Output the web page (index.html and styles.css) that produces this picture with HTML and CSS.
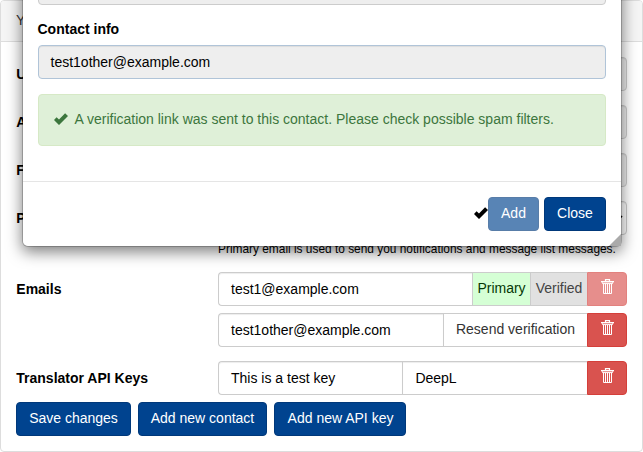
FILE: index.html
```html
<!DOCTYPE html>
<html lang="en">
<head>
<meta charset="utf-8">
<title>Your profile</title>
<link rel="stylesheet" href="styles.css">
</head>
<body>
<svg class="defs" width="0" height="0" aria-hidden="true">
  <symbol id="check" viewBox="0 0 14 12"><path d="M0 7.1 2.6 4.3 5 6.6 11.1 0.2 14 3.1 5 12z"/></symbol>
  <symbol id="trash" viewBox="0 0 13 16"><path d="M4.5 2.5V.6h4v1.9" fill="none" stroke="currentColor" stroke-width="1.2"/><path d="M0 2h13v1.4H0z" fill="currentColor"/><path d="M1.5 3.4v1.2h10V3.4M2.5 4.6v9.9h8V4.6M4.5 5v9M6.5 5v9M8.5 5v9" fill="none" stroke="currentColor"/></symbol>
</svg>
<main class="panel">
  <header class="panel-heading">Your profile</header>
  <form class="panel-body">
    <div class="row"><label>Username</label><div class="group"><span class="input disabled"></span></div></div>
    <div class="row"><label>Affiliation</label><div class="group"><span class="input disabled"></span></div></div>
    <div class="row"><label>Full name</label><div class="group"><span class="input disabled"></span></div></div>
    <div class="row help-row"><label>Primary email</label><div>
      <div class="group"><span class="input select"><svg width="9" height="6" viewBox="0 0 9 6"><path d="M1 1l3.5 3.5L8 1" fill="none" stroke="#000" stroke-width="1.7"/></svg></span></div>
      <p class="help">Primary email is used to send you notifications and message list messages.</p>
    </div></div>
    <div class="row emails"><label>Emails</label><div class="stack">
      <div class="group"><span class="input">test1@example.com</span><span class="addon primary">Primary</span><span class="addon verified">Verified</span><button type="button" class="delete faded"><svg><use href="#trash"/></svg></button></div>
      <div class="group"><span class="input">test1other@example.com</span><span class="addon resend">Resend verification</span><button type="button" class="delete"><svg><use href="#trash"/></svg></button></div>
    </div></div>
    <div class="row keys"><label>Translator API Keys</label>
      <div class="group"><span class="input">This is a test key</span><span class="input second">DeepL</span><button type="button" class="delete"><svg><use href="#trash"/></svg></button></div>
    </div>
    <div class="actions"><button type="button" class="btn save">Save changes</button><button type="button" class="btn contact">Add new contact</button><button type="button" class="btn api">Add new API key</button></div>
  </form>
</main>
<section class="modal">
  <div class="modal-body">
    <span class="input disabled"></span>
    <label class="info-label">Contact info</label>
    <span class="input disabled active">test1other@example.com</span>
    <div class="alert"><svg class="check"><use href="#check"/></svg><span>A verification link was sent to this contact. Please check possible spam filters.</span></div>
  </div>
  <footer class="modal-footer"><svg class="check"><use href="#check"/></svg><button type="button" class="btn add">Add</button><button type="button" class="btn close">Close</button></footer>
  <i class="grip"></i>
</section>
</body>
</html>
```

FILE: styles.css
```css
* { box-sizing: border-box; }
body { margin: 0; height: 452px; overflow: hidden; position: relative; background: #fff; color: #000; font: 14px/20px "Liberation Sans", Arial, sans-serif; }
button { font: inherit; margin: 0; padding: 0; }
.defs { position: absolute; }
.panel { height: 452px; border: 1px solid #ddd; border-radius: 4px; }
.panel-heading { height: 41px; padding: 9px 15px; color: #333; background: #f5f5f5; border-bottom: 1px solid #ddd; border-radius: 3px 3px 0 0; }
.panel-body { padding: 15px; }
.row { display: grid; grid-template-columns: 202px 1fr; margin-bottom: 14px; }
label { font-weight: bold; padding-top: 7px; }
.row > label { padding-left: .3px; }
.group { display: flex; height: 34px; min-width: 0; }
.input { display: block; flex: 1; height: 34px; padding: 6px 12px; border: 1px solid #ccc; border-radius: 4px; background: #fff; box-shadow: inset 0 1px 1px rgba(0,0,0,.075); white-space: nowrap; }
.disabled { background: #eee; }
.active { border-color: #b0c4d8; padding-left: 11.5px; }
.select { display: flex; align-items: center; justify-content: flex-end; padding-right: 3px; }
.help-row { margin-bottom: 0; }
.help { margin: 5px 0 0; height: 32px; font-size: 11.9px; line-height: 18px; white-space: nowrap; }
.stack { display: grid; gap: 7px; }
.group .input:not(:only-child) { border-radius: 4px 0 0 4px; border-right: 0; }
.group .input.second { border-radius: 0; padding-left: 12.4px; }
.keys .input:first-child { flex: 0 0 184px; }
.addon { border: 1px solid #ccc; border-right: 0; line-height: 30px; text-align: center; white-space: nowrap; }
.primary { width: 58px; color: #063806; background: #d5ffd5; }
.verified { width: 57px; color: #444; background: #e1e1e1; }
.resend { width: 144px; color: #333; }
.delete { width: 40px; height: 34px; display: flex; justify-content: center; padding-top: 6px; color: #fff; background: #d9534f; border: 1px solid #d43f3a; border-radius: 0 4px 4px 0; }
.delete svg { width: 13px; height: 16px; margin-left: 1px; }
.faded { opacity: .65; }
.keys { margin-bottom: 7px; }
.actions { display: flex; gap: 7px; }
.btn { height: 34px; color: #fff; background: #00438f; border: 1px solid #00387a; border-radius: 4px; line-height: 30px; padding-bottom: 2px; white-space: nowrap; }
.save { width: 115px; }
.contact { width: 129px; }
.api { width: 132px; padding-left: 1px; }
.modal { position: absolute; left: 22px; top: -30px; width: 600px; height: 277px; background: #fff; background-clip: padding-box; border: 1px solid rgba(0,0,0,.2); border-radius: 6px; box-shadow: 0 5px 15px rgba(0,0,0,.5); }
.modal-body { height: 210px; padding: 0 15px; }
.info-label { display: block; height: 40px; padding-top: 14px; margin-left: -.5px; }
.alert { display: flex; align-items: center; height: 52px; margin-top: 15px; padding: 0 15px 2px; color: #3c763d; background: #dff0d8; border: 1px solid #d6e9c6; border-radius: 4px; white-space: nowrap; }
.check { width: 14px; height: 12px; fill: currentColor; flex: none; }
.alert .check { margin: 0 6.5px 1px 0; }
.modal-footer { height: 65px; display: flex; justify-content: flex-end; border-top: 1px solid #e5e5e5; padding: 15px; }
.modal-footer .check { margin-top: 10px; }
.add { width: 51px; opacity: .65; }
.close { width: 62px; margin-left: 5px; }
.grip { position: absolute; right: 0; bottom: 0; width: 12px; height: 12px; background: #aaa; clip-path: polygon(100% 0, 100% 100%, 0 100%); }
```
